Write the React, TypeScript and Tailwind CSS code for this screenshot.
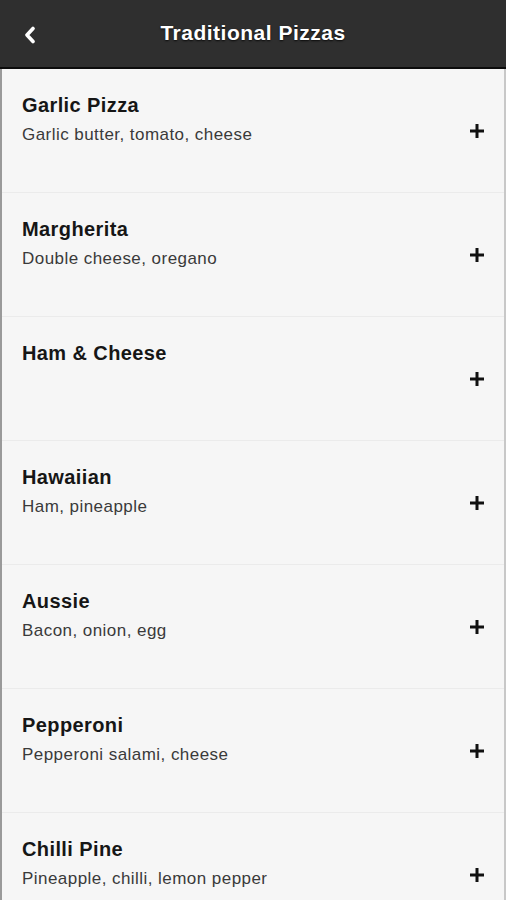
import React from "react";

const items = [
  { name: "Garlic Pizza", desc: "Garlic butter, tomato, cheese" },
  { name: "Margherita", desc: "Double cheese, oregano" },
  { name: "Ham & Cheese", desc: "" },
  { name: "Hawaiian", desc: "Ham, pineapple" },
  { name: "Aussie", desc: "Bacon, onion, egg" },
  { name: "Pepperoni", desc: "Pepperoni salami, cheese" },
  { name: "Chilli Pine", desc: "Pineapple, chilli, lemon pepper" },
];

function Plus() {
  return (
    <svg width="14" height="14" viewBox="0 0 14 14" className="shrink-0">
      <rect x="5.5" y="0" width="3" height="14" fill="#111" />
      <rect x="0" y="5.5" width="14" height="3" fill="#111" />
    </svg>
  );
}

export default function App() {
  return (
    <div
      className="w-[506px] h-[900px] overflow-hidden bg-[#f6f6f6] flex flex-col"
      style={{ fontFamily: '"Liberation Sans", Arial, sans-serif' }}
    >
      <div className="h-[69px] bg-[#2f2f2f] relative flex items-center justify-center shrink-0 border-b-2 border-[#0c0c0c] pb-[2px]">
        <svg
          width="14"
          height="18"
          viewBox="0 0 14 18"
          className="absolute left-[23px] top-[26px]"
        >
          <path
            d="M10 2.5 L4 9 L10 15.5"
            stroke="#fff"
            strokeWidth="3.6"
            fill="none"
            strokeLinecap="round"
            strokeLinejoin="round"
          />
        </svg>
        <span
          className="text-white font-bold text-[21px] leading-none tracking-[0.5px]"
          style={{ textShadow: "0 1px 2px rgba(0,0,0,0.8)" }}
        >
          Traditional Pizzas
        </span>
      </div>
      <div className="flex-1 border-l-2 border-l-[#9a9a9a] border-r-2 border-r-[#c8c8c8]">
        {items.map((it) => (
          <div
            key={it.name}
            className="h-[124px] relative border-b border-[#ebebeb] pl-[20px] pr-[20px] flex items-center"
          >
            <div className="flex-1 self-start pt-[24px]">
              <div className="text-[20px] leading-[24px] font-bold text-[#161616] tracking-[0.4px]">
                {it.name}
              </div>
              {it.desc && (
                <div className="text-[17px] leading-[20px] text-[#3a3a3a] mt-[8px] tracking-[0.45px]">
                  {it.desc}
                </div>
              )}
            </div>
            <div className="mt-[0px]">
              <Plus />
            </div>
          </div>
        ))}
      </div>
    </div>
  );
}
